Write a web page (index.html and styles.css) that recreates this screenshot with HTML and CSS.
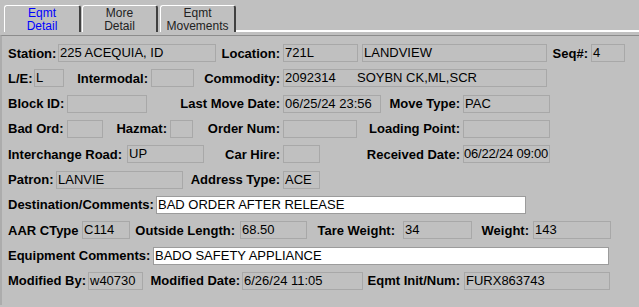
FILE: index.html
```html
<!DOCTYPE html>
<html lang="en">

<head>
    <meta charset="UTF-8">
    <title>Equipment Detail</title>
    <link rel="stylesheet" href="styles.css">
</head>

<body>
    <!-- Tabs -->
    <div class="tabstrip">
        <div class="tab active w77">Eqmt<br>Detail</div>
        <div class="tab w76 ml1">More<br>Detail</div>
        <div class="tab w76 ml2">Eqmt<br>Movements</div>
        <div class="tabline"></div>
    </div>

    <!-- Detail Panel -->
    <div class="panel">
        <div class="row">
            <span class="lbl left w50">Station:</span>
            <span class="box w158">225 ACEQUIA, ID</span>
            <span class="lbl w67">Location:</span>
            <span class="box w75">721L</span>
            <span class="box w185 ml4">LANDVIEW</span>
            <span class="lbl w44">Seq#:</span>
            <span class="box w34">4</span>
        </div>

        <div class="row">
            <span class="lbl left w26">L/E:</span>
            <span class="box w30">L</span>
            <span class="lbl w87">Intermodal:</span>
            <span class="box w43"></span>
            <span class="lbl w89">Commodity:</span>
            <span class="box w264"><span class="code">2092314</span>SOYBN CK,ML,SCR</span>
        </div>

        <div class="row">
            <span class="lbl left w59">Block ID:</span>
            <span class="box w80"></span>
            <span class="lbl w136">Last Move Date:</span>
            <span class="box w98">06/25/24 23:56</span>
            <span class="lbl w82">Move Type:</span>
            <span class="box w87">PAC</span>
        </div>

        <div class="row">
            <span class="lbl left w59">Bad Ord:</span>
            <span class="box w36"></span>
            <span class="lbl w67">Hazmat:</span>
            <span class="box w23"></span>
            <span class="lbl w90">Order Num:</span>
            <span class="box w74"></span>
            <span class="lbl w106">Loading Point:</span>
            <span class="box w87"></span>
        </div>

        <div class="row">
            <span class="lbl left w119">Interchange Road:</span>
            <span class="box w77">UP</span>
            <span class="lbl w79">Car Hire:</span>
            <span class="box w37"></span>
            <span class="lbl w143">Received Date:</span>
            <span class="box w87 tight">06/22/24 09:00</span>
        </div>

        <div class="row">
            <span class="lbl left w48">Patron:</span>
            <span class="box w127">LANVIE</span>
            <span class="lbl w100">Address Type:</span>
            <span class="box w37">ACE</span>
        </div>

        <div class="row">
            <span class="lbl left w148">Destination/Comments:</span>
            <span class="box edit w370">BAD ORDER AFTER RELEASE</span>
        </div>

        <div class="row">
            <span class="lbl left w74">AAR CType</span>
            <span class="box w48">C114</span>
            <span class="lbl w110 pr5">Outside Length:</span>
            <span class="box w67">68.50</span>
            <span class="lbl w96 pr8">Tare Weight:</span>
            <span class="box w69">34</span>
            <span class="lbl w61 pr4">Weight:</span>
            <span class="box w78">143</span>
        </div>

        <div class="row">
            <span class="lbl left w145">Equipment Comments:</span>
            <span class="box edit w456">BADO SAFETY APPLIANCE</span>
        </div>

        <div class="row">
            <span class="lbl left w80">Modified By:</span>
            <span class="box w55">w40730</span>
            <span class="lbl w99 pr2">Modified Date:</span>
            <span class="box w121">6/26/24 11:05</span>
            <span class="lbl w101 pr4">Eqmt Init/Num:</span>
            <span class="box w146">FURX863743</span>
        </div>
    </div>
</body>

</html>
```

FILE: styles.css
```css
body {
    background-color: #c0c0c0;
    font-family: "Liberation Sans", Arial, sans-serif;
    font-size: 13px;
    color: #000;
    margin: 0;
    padding: 0;
}

/* Tabs */
.tabstrip {
    display: flex;
    align-items: flex-end;
    height: 32px;
    padding: 5px 0 0 4px;
    box-sizing: border-box;
}

.tab {
    height: 27px;
    box-sizing: border-box;
    border-top: 1px solid #fff;
    border-left: 1px solid #fff;
    border-right: 2px solid #404040;
    border-radius: 3px 3px 0 0;
    padding-top: 1px;
    font-size: 12px;
    line-height: 13px;
    text-align: center;
    color: #222;
}

.tab.active {
    color: #0000ff;
}

.tabline {
    flex: 1;
    height: 2px;
    background-color: #fff;
}

/* Panel */
.panel {
    margin-top: 3px;
    border-top: 1px solid #8c8c8c;
    border-left: 2px solid #acacac;
    padding: 8px 0 0 6px;
    height: 270px;
    box-sizing: border-box;
    display: flex;
    flex-direction: column;
    gap: 7.33px;
}

.row {
    display: flex;
    align-items: center;
    height: 18px;
}

.lbl {
    font-weight: bold;
    text-align: right;
    padding-right: 3px;
    box-sizing: border-box;
    white-space: nowrap;
    flex: none;
}

.lbl.left {
    text-align: left;
    padding-right: 0;
}

.box {
    height: 18px;
    box-sizing: border-box;
    border: 1px solid #a8a8a8;
    padding-left: 1px;
    line-height: 16px;
    white-space: nowrap;
    flex: none;
}

.box.tight {
    padding-left: 0;
    letter-spacing: -0.2px;
}

.box.edit {
    background-color: #fff;
    border-color: #9c9c9c;
}

.code {
    display: inline-block;
    width: 72px;
}

/* spacing helpers */
.ml1 { margin-left: 1px; }
.ml2 { margin-left: 2px; }
.ml4 { margin-left: 4px; }
.pr2 { padding-right: 2px; }
.pr4 { padding-right: 4px; }
.pr5 { padding-right: 5px; }
.pr8 { padding-right: 8px; }

/* widths */
.w23 { width: 23px; }
.w26 { width: 26px; }
.w30 { width: 30px; }
.w34 { width: 34px; }
.w36 { width: 36px; }
.w37 { width: 37px; }
.w43 { width: 43px; }
.w44 { width: 44px; }
.w48 { width: 48px; }
.w50 { width: 50px; }
.w55 { width: 55px; }
.w59 { width: 59px; }
.w61 { width: 61px; }
.w67 { width: 67px; }
.w69 { width: 69px; }
.w74 { width: 74px; }
.w75 { width: 75px; }
.w76 { width: 76px; }
.w77 { width: 77px; }
.w78 { width: 78px; }
.w79 { width: 79px; }
.w80 { width: 80px; }
.w82 { width: 82px; }
.w87 { width: 87px; }
.w89 { width: 89px; }
.w90 { width: 90px; }
.w96 { width: 96px; }
.w98 { width: 98px; }
.w99 { width: 99px; }
.w100 { width: 100px; }
.w101 { width: 101px; }
.w106 { width: 106px; }
.w110 { width: 110px; }
.w119 { width: 119px; }
.w121 { width: 121px; }
.w127 { width: 127px; }
.w136 { width: 136px; }
.w143 { width: 143px; }
.w145 { width: 145px; }
.w146 { width: 146px; }
.w148 { width: 148px; }
.w158 { width: 158px; }
.w185 { width: 185px; }
.w264 { width: 264px; }
.w370 { width: 370px; }
.w456 { width: 456px; }
```
